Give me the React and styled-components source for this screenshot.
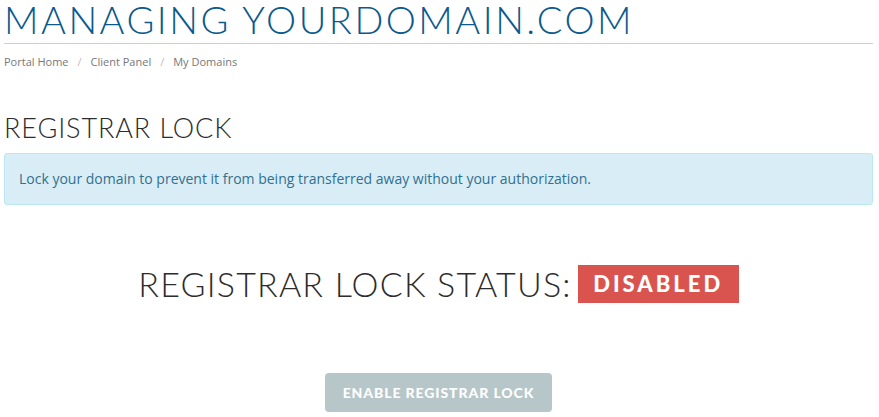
import React from 'react'
import styled, {createGlobalStyle} from 'styled-components'

const GlobalStyle = createGlobalStyle`
    body {
        margin: 0;
        background: #fff;
        font-family: "Open Sans", "Liberation Sans", sans-serif;
    }
`

const Page = styled.div`
    padding: 0 6px 0 4px;
`

const Header = styled.header`
    border-bottom: 1px solid #cfcfcf;
    padding-bottom: 5px;
`

const Title = styled.h1`
    margin: 0;
    font-family: "Lato", "Open Sans", sans-serif;
    font-weight: 300;
    font-size: 38px;
    line-height: 38px;
    letter-spacing: 2.5px;
    color: #0b5a8c;
`

const Crumbs = styled.ol`
    list-style: none;
    margin: 0;
    padding: 10px 0 0;
    display: flex;
    font-size: 11px;
    color: #777;
`

const Crumb = styled.li`
    & + &::before {
        content: "/";
        color: #bbb;
        padding: 0 9px;
    }
`

const SectionTitle = styled.h2`
    margin: 44px 0 0;
    font-family: "Lato", "Open Sans", sans-serif;
    font-weight: 300;
    font-size: 27px;
    line-height: 30px;
    letter-spacing: 0.9px;
    color: #2c2c2c;
`

const Alert = styled.div`
    margin-top: 10px;
    background: #d9edf7;
    border: 1px solid #bce8f1;
    border-radius: 3px;
    color: #31708f;
    font-size: 14px;
    padding: 15px 14px;
    line-height: 20px;
`

const StatusRow = styled.div`
    margin-top: 58px;
    display: flex;
    justify-content: center;
    align-items: center;
    gap: 6px;
`

const StatusLabel = styled.span`
    font-family: "Lato", "Open Sans", sans-serif;
    font-weight: 300;
    font-size: 34px;
    letter-spacing: 1.2px;
    color: #2c2c2c;
`

const Badge = styled.span`
    background: ${p => p.$tone === 'on' ? '#5cb85c' : '#d9534f'};
    color: #fff;
    font-family: "Lato", "Open Sans", sans-serif;
    font-weight: 900;
    font-size: 22px;
    letter-spacing: 3px;
    height: 38px;
    width: 161px;
    display: flex;
    align-items: center;
    justify-content: center;
`

const Actions = styled.div`
    margin-top: 69px;
    display: flex;
    justify-content: center;
`

const Button = styled.button`
    background: #b7c6c9;
    border: none;
    border-radius: 4px;
    color: #fff;
    font-family: "Lato", "Open Sans", sans-serif;
    font-weight: 900;
    font-size: 14px;
    width: 227px;
    height: 39px;
    letter-spacing: 0.9px;
`

const App = () => {
    return(
        <Page>
            <GlobalStyle />
            <Header>
                <Title>MANAGING YOURDOMAIN.COM</Title>
            </Header>
            <Crumbs>
                <Crumb>Portal Home</Crumb>
                <Crumb>Client Panel</Crumb>
                <Crumb>My Domains</Crumb>
            </Crumbs>
            <SectionTitle>REGISTRAR LOCK</SectionTitle>
            <Alert>Lock your domain to prevent it from being transferred away without your authorization.</Alert>
            <StatusRow>
                <StatusLabel>REGISTRAR LOCK STATUS:</StatusLabel>
                <Badge $tone='off'>DISABLED</Badge>
            </StatusRow>
            <Actions>
                <Button>ENABLE REGISTRAR LOCK</Button>
            </Actions>
        </Page>
    )
}

export default App
